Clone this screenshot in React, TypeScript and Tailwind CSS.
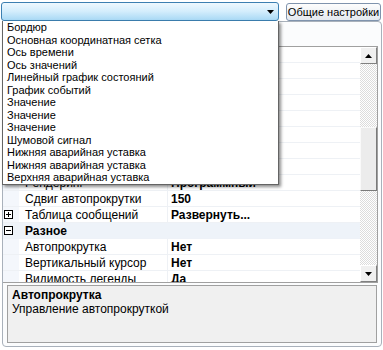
import React from "react";

const listItems = [
  "Бордюр",
  "Основная координатная сетка",
  "Ось времени",
  "Ось значений",
  "Линейный график состояний",
  "График событий",
  "Значение",
  "Значение",
  "Значение",
  "Шумовой сигнал",
  "Нижняя аварийная уставка",
  "Нижняя аварийная уставка",
  "Верхняя аварийная уставка",
];

type Row =
  | { kind: "prop"; name: string; value: string; expand?: boolean }
  | { kind: "cat"; name: string };

const rows: Row[] = [
  { kind: "prop", name: "Цвет фона", value: "White" },
  { kind: "prop", name: "Цвет сетки", value: "Gray" },
  { kind: "prop", name: "Шрифт", value: "Tahoma; 8pt" },
  { kind: "prop", name: "Толщина линий", value: "1" },
  { kind: "prop", name: "Интервал обновления", value: "1000" },
  { kind: "prop", name: "Период", value: "00:01:00" },
  { kind: "prop", name: "Масштаб", value: "100" },
  { kind: "prop", name: "Сглаживание", value: "Да" },
  { kind: "prop", name: "Рендеринг", value: "Программный" },
  { kind: "prop", name: "Сдвиг автопрокрутки", value: "150" },
  { kind: "prop", name: "Таблица сообщений", value: "Развернуть...", expand: true },
  { kind: "cat", name: "Разное" },
  { kind: "prop", name: "Автопрокрутка", value: "Нет" },
  { kind: "prop", name: "Вертикальный курсор", value: "Нет" },
  { kind: "prop", name: "Видимость легенды", value: "Да" },
];

function Box({ plus }: { plus: boolean }) {
  return (
    <svg width="9" height="9" viewBox="0 0 9 9" className="block">
      <rect x="0.5" y="0.5" width="8" height="8" fill="#fff" stroke="#000" />
      <path d="M2 4.5h5" stroke="#000" />
      {plus && <path d="M4.5 2v5" stroke="#000" />}
    </svg>
  );
}

function Tri({ up }: { up: boolean }) {
  return (
    <svg width="7" height="4" viewBox="0 0 7 4" className="block">
      <path d={up ? "M0 4h7L3.5 0z" : "M0 0h7L3.5 4z"} fill="#000" />
    </svg>
  );
}

export default function App() {
  return (
    <div className="relative w-[383px] h-[350px] bg-white overflow-hidden font-['Liberation_Sans',Arial,sans-serif] text-black">
      {/* top bar */}
      <div className="flex items-start h-[21px]">
        <div className="ml-[1px] mt-[2px] w-[278px] h-[19px] rounded-[3px] border border-[#3c7fb1] bg-gradient-to-b from-[#eef8fe] via-[#d3edfc] to-[#a9d9f5] flex items-center justify-end pr-[4px]">
          <Tri up={false} />
        </div>
        <div className="ml-[7px] mt-[3px] w-[95px] h-[18px] rounded-[3px] border border-[#7f93ad] bg-gradient-to-b from-[#fdfdfd] to-[#e4e9ef] text-[11px] leading-none flex items-center justify-center whitespace-nowrap">
          Общие настройки
        </div>
      </div>

      {/* frame */}
      <div className="ml-[2px] w-[380px] h-[326px] rounded-[4px] border border-[#a9b1bb] bg-[#fbfcfd] flex flex-col">
        <div className="h-[24px]" />
        <div className="h-[237px] mr-[3px] border-t border-b border-r border-[#a0a0a0] flex bg-white">
          <div className="flex-1 overflow-hidden text-[12px]">
            {rows.map((r, i) =>
              r.kind === "cat" ? (
                <div key={i} className="h-[16px] flex border-b border-[#eef2f8] bg-[#eef3f9] overflow-hidden">
                  <div className="w-[16px] flex items-center pl-[1px]">
                    <Box plus={false} />
                  </div>
                  <div className="pl-[6px] pt-[1px] leading-[15px] font-bold">{r.name}</div>
                </div>
              ) : (
                <div key={i} className="h-[16px] flex border-b border-[#eef1f5] overflow-hidden">
                  <div className="w-[16px] bg-[#f4f7fc] flex items-center pl-[1px]">
                    {r.expand && <Box plus={true} />}
                  </div>
                  <div className="w-[149px] pl-[6px] pt-[1px] leading-[15px] whitespace-nowrap overflow-hidden border-r border-[#eef1f5]">
                    {r.name}
                  </div>
                  <div className="flex-1 pl-[3px] pt-[1px] leading-[15px] font-bold whitespace-nowrap">{r.value}</div>
                </div>
              )
            )}
          </div>
          {/* scrollbar */}
          <div className="w-[17px] flex flex-col bg-[repeating-conic-gradient(#dcdcdc_0_25%,#ffffff_0_50%)] bg-[length:2px_2px]">
            <div className="h-[17px] bg-[#f0f0f0] border border-t-white border-l-white border-r-[#808080] border-b-[#808080] flex items-center justify-center">
              <Tri up={true} />
            </div>
            <div className="h-[63px]" />
            <div className="h-[64px] bg-[#ececec] border border-t-[#fafafa] border-l-[#fafafa] border-r-[#7a7a7a] border-b-[#7a7a7a]" />
            <div className="flex-1" />
            <div className="h-[17px] bg-[#f0f0f0] border border-t-white border-l-white border-r-[#808080] border-b-[#808080] flex items-center justify-center">
              <Tri up={false} />
            </div>
          </div>
        </div>
        <div className="h-[2px]" />
        <div className="mx-[4px] h-[58px] border border-[#a0a0a0] bg-[#f0f0f0] pl-[4px] pt-[2px] text-[12px] leading-[14px]">
          <div className="font-bold">Автопрокрутка</div>
          <div>Управление автопрокруткой</div>
        </div>
      </div>

      {/* dropdown list */}
      <div className="absolute left-[2px] top-[21px] w-[277px] bg-white border-l border-r border-b border-[#646464] shadow-[2px_2px_3px_rgba(0,0,0,0.45)] text-[11px] leading-[12.5px] pl-[4px]">
        {listItems.map((t, i) => (
          <div key={i} className="whitespace-nowrap">
            {t}
          </div>
        ))}
      </div>
    </div>
  );
}
